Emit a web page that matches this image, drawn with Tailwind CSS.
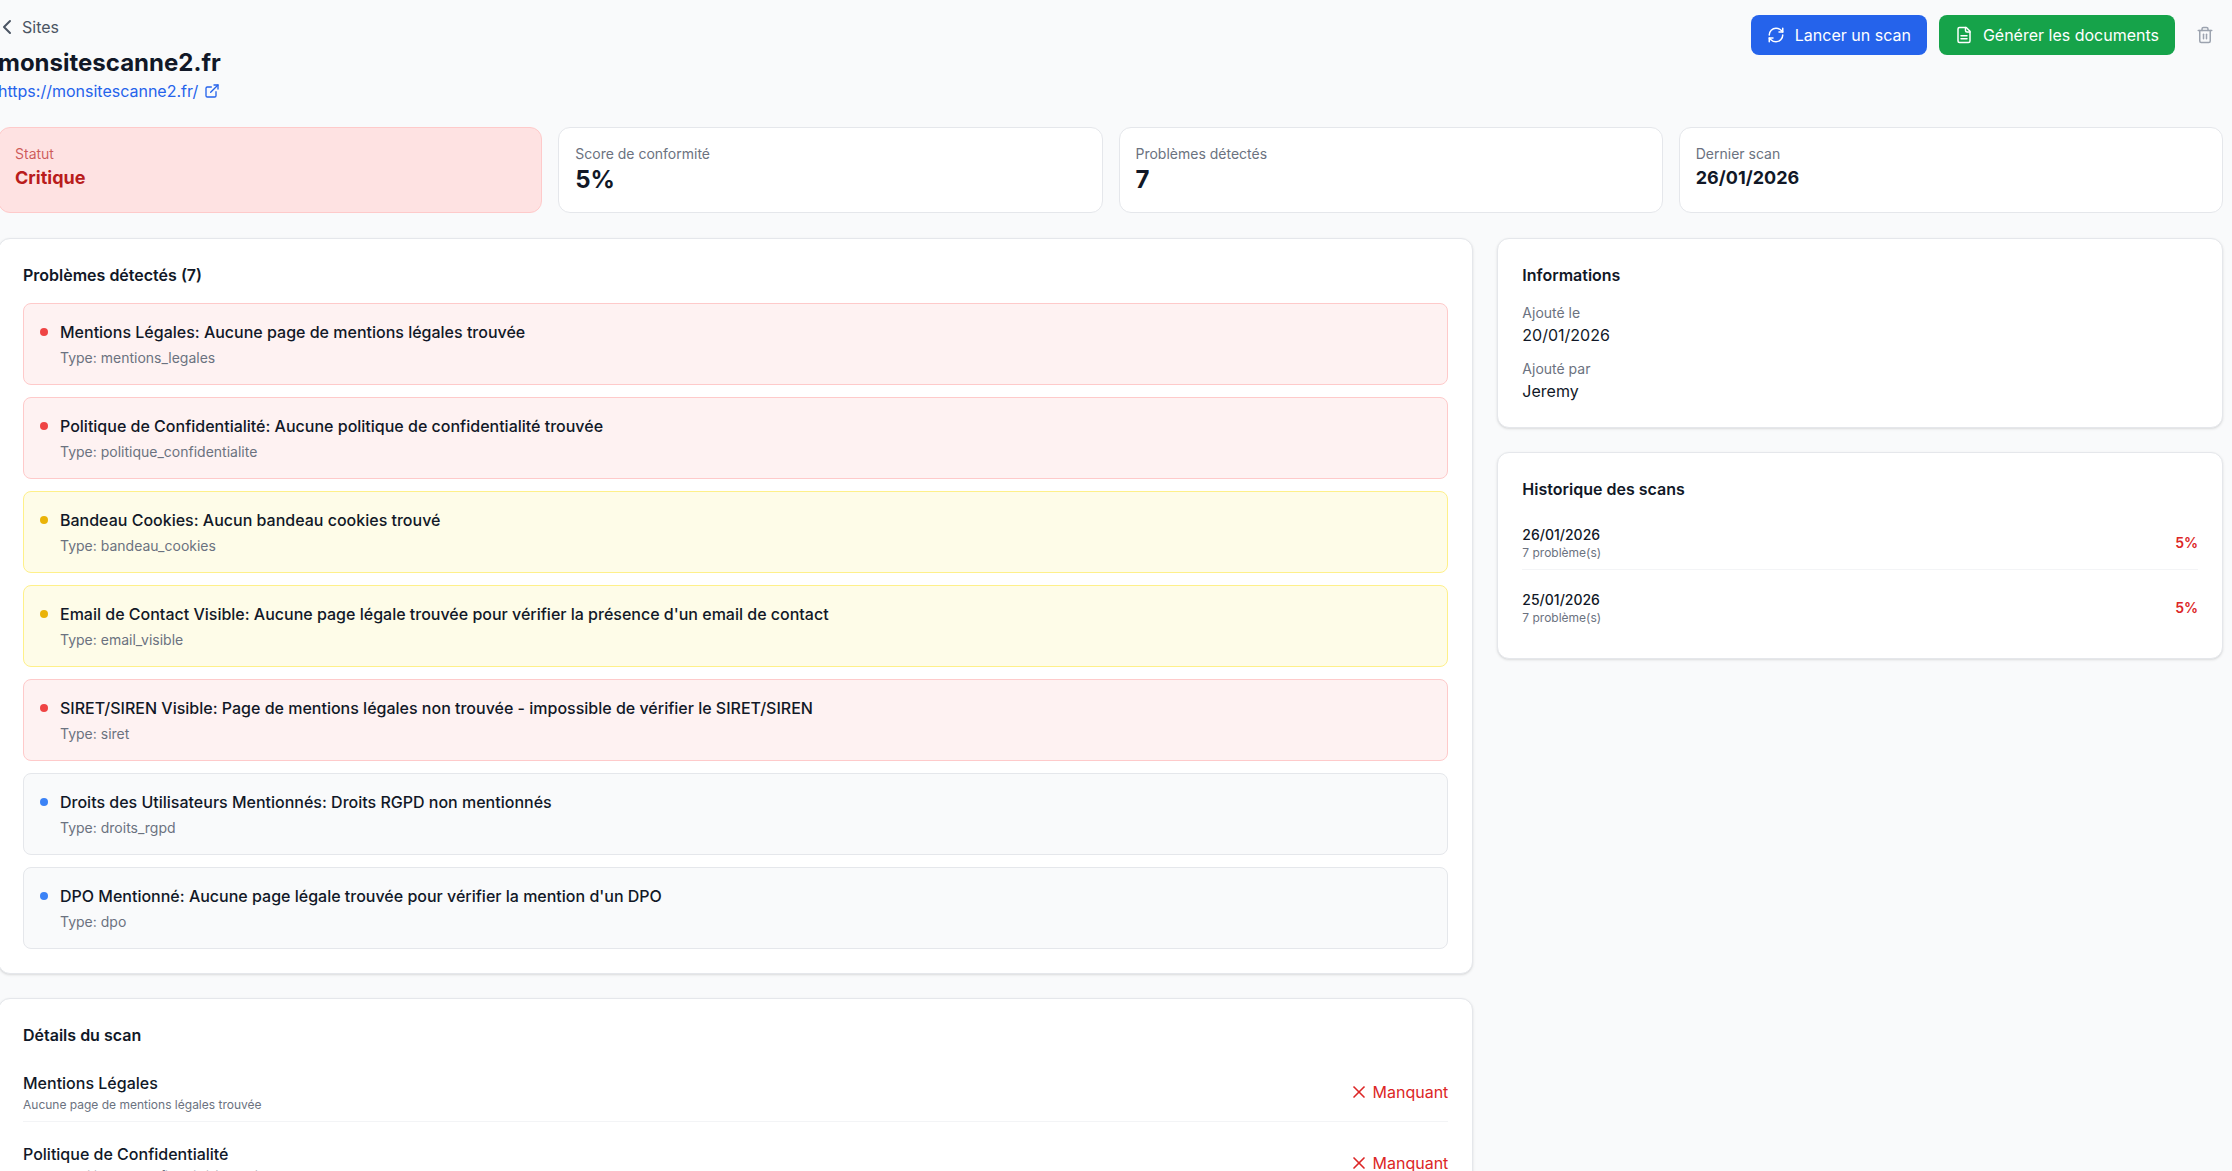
<!DOCTYPE html>
<html lang="fr">
<head>
    <meta charset="UTF-8">
    <meta name="viewport" content="width=device-width, initial-scale=1.0">
    <script src="https://cdn.jsdelivr.net/npm/@tailwindcss/browser@4"></script>
    <title>monsitescanne2.fr</title>
</head>
<body class="bg-[#f9fafb] h-screen overflow-hidden font-['Inter',sans-serif] text-[#111827]">
<div class="-ml-[2px] pr-[9px] pt-[15px]">

    <!-- Header -->
    <div class="flex justify-between items-start mb-6">
        <div>
            <a href="#" class="flex items-center gap-[3px] -ml-[3px] text-[#4b5563] mb-2">
                <svg class="w-6 h-6" fill="none" stroke="currentColor" stroke-width="2" stroke-linecap="round" stroke-linejoin="round" viewBox="0 0 24 24"><path d="m15 18-6-6 6-6"/></svg>
                Sites
            </a>
            <h1 class="text-2xl font-bold">monsitescanne2.fr</h1>
            <a href="#" class="flex items-center gap-1.5 text-[#2563eb]">
                https://monsitescanne2.fr/
                <svg class="w-4 h-4" fill="none" stroke="currentColor" stroke-width="2" stroke-linecap="round" stroke-linejoin="round" viewBox="0 0 24 24"><path d="M15 3h6v6"/><path d="M10 14 21 3"/><path d="M18 13v6a2 2 0 0 1-2 2H5a2 2 0 0 1-2-2V8a2 2 0 0 1 2-2h6"/></svg>
            </a>
        </div>
        <div class="flex items-center gap-3">
            <button class="flex items-center gap-2.5 bg-[#2563eb] text-white px-4 py-2 rounded-lg font-normal">
                <svg class="w-[18px] h-[18px]" fill="none" stroke="currentColor" stroke-width="2" stroke-linecap="round" stroke-linejoin="round" viewBox="0 0 24 24"><path d="M3 12a9 9 0 0 1 9-9 9.75 9.75 0 0 1 6.74 2.74L21 8"/><path d="M21 3v5h-5"/><path d="M21 12a9 9 0 0 1-9 9 9.75 9.75 0 0 1-6.74-2.74L3 16"/><path d="M8 16H3v5"/></svg>
                Lancer un scan
            </button>
            <button class="flex items-center gap-2.5 bg-[#16a34a] text-white px-4 py-2 rounded-lg font-normal">
                <svg class="w-[18px] h-[18px]" fill="none" stroke="currentColor" stroke-width="2" stroke-linecap="round" stroke-linejoin="round" viewBox="0 0 24 24"><path d="M15 2H6a2 2 0 0 0-2 2v16a2 2 0 0 0 2 2h12a2 2 0 0 0 2-2V7Z"/><path d="M14 2v4a2 2 0 0 0 2 2h4"/><path d="M16 13H8"/><path d="M16 17H8"/></svg>
                Générer les documents
            </button>
            <button class="p-[9px] text-[#9ca3af]">
                <svg class="w-[18px] h-[18px]" fill="none" stroke="currentColor" stroke-width="2" stroke-linecap="round" stroke-linejoin="round" viewBox="0 0 24 24"><path d="M3 6h18"/><path d="M19 6v14c0 1-1 2-2 2H7c-1 0-2-1-2-2V6"/><path d="M8 6V4c0-1 1-2 2-2h4c1 0 2 1 2 2v2"/><path d="M10 11v6"/><path d="M14 11v6"/></svg>
            </button>
        </div>
    </div>

    <!-- Stats -->
    <div class="grid grid-cols-4 gap-4 mb-[25px]">
        <div class="bg-[#fee2e2] border border-[#fecaca] rounded-xl p-4">
            <p class="text-sm text-[#b91c1c]/70">Statut</p>
            <p class="text-lg font-bold text-[#b91c1c]">Critique</p>
        </div>
        <div class="bg-white border border-[#e5e7eb] rounded-xl p-4">
            <p class="text-sm text-[#6b7280]">Score de conformité</p>
            <p class="text-2xl font-bold">5%</p>
        </div>
        <div class="bg-white border border-[#e5e7eb] rounded-xl p-4">
            <p class="text-sm text-[#6b7280]">Problèmes détectés</p>
            <p class="text-2xl font-bold">7</p>
        </div>
        <div class="bg-white border border-[#e5e7eb] rounded-xl p-4">
            <p class="text-sm text-[#6b7280]">Dernier scan</p>
            <p class="text-lg font-bold">26/01/2026</p>
        </div>
    </div>

    <div class="grid grid-cols-3 gap-6">
        <!-- Left column -->
        <div class="col-span-2 space-y-6">
            <div class="bg-white border border-[#e5e7eb] rounded-xl shadow-sm p-6">
                <h2 class="font-semibold mb-4">Problèmes détectés (7)</h2>
                <div class="space-y-3">
                    <div class="flex gap-3 bg-[#fef2f2] border border-[#fecaca] rounded-lg p-4">
                        <span class="w-2 h-2 mt-2 rounded-full bg-[#ef4444] shrink-0"></span>
                        <div>
                            <p class="font-medium">Mentions Légales: Aucune page de mentions légales trouvée</p>
                            <p class="text-sm text-[#6b7280] mt-1">Type: mentions_legales</p>
                        </div>
                    </div>
                    <div class="flex gap-3 bg-[#fef2f2] border border-[#fecaca] rounded-lg p-4">
                        <span class="w-2 h-2 mt-2 rounded-full bg-[#ef4444] shrink-0"></span>
                        <div>
                            <p class="font-medium">Politique de Confidentialité: Aucune politique de confidentialité trouvée</p>
                            <p class="text-sm text-[#6b7280] mt-1">Type: politique_confidentialite</p>
                        </div>
                    </div>
                    <div class="flex gap-3 bg-[#fefce8] border border-[#fef08a] rounded-lg p-4">
                        <span class="w-2 h-2 mt-2 rounded-full bg-[#eab308] shrink-0"></span>
                        <div>
                            <p class="font-medium">Bandeau Cookies: Aucun bandeau cookies trouvé</p>
                            <p class="text-sm text-[#6b7280] mt-1">Type: bandeau_cookies</p>
                        </div>
                    </div>
                    <div class="flex gap-3 bg-[#fefce8] border border-[#fef08a] rounded-lg p-4">
                        <span class="w-2 h-2 mt-2 rounded-full bg-[#eab308] shrink-0"></span>
                        <div>
                            <p class="font-medium">Email de Contact Visible: Aucune page légale trouvée pour vérifier la présence d'un email de contact</p>
                            <p class="text-sm text-[#6b7280] mt-1">Type: email_visible</p>
                        </div>
                    </div>
                    <div class="flex gap-3 bg-[#fef2f2] border border-[#fecaca] rounded-lg p-4">
                        <span class="w-2 h-2 mt-2 rounded-full bg-[#ef4444] shrink-0"></span>
                        <div>
                            <p class="font-medium">SIRET/SIREN Visible: Page de mentions légales non trouvée - impossible de vérifier le SIRET/SIREN</p>
                            <p class="text-sm text-[#6b7280] mt-1">Type: siret</p>
                        </div>
                    </div>
                    <div class="flex gap-3 bg-[#f9fafb] border border-[#e5e7eb] rounded-lg p-4">
                        <span class="w-2 h-2 mt-2 rounded-full bg-[#3b82f6] shrink-0"></span>
                        <div>
                            <p class="font-medium">Droits des Utilisateurs Mentionnés: Droits RGPD non mentionnés</p>
                            <p class="text-sm text-[#6b7280] mt-1">Type: droits_rgpd</p>
                        </div>
                    </div>
                    <div class="flex gap-3 bg-[#f9fafb] border border-[#e5e7eb] rounded-lg p-4">
                        <span class="w-2 h-2 mt-2 rounded-full bg-[#3b82f6] shrink-0"></span>
                        <div>
                            <p class="font-medium">DPO Mentionné: Aucune page légale trouvée pour vérifier la mention d'un DPO</p>
                            <p class="text-sm text-[#6b7280] mt-1">Type: dpo</p>
                        </div>
                    </div>
                </div>
            </div>

            <div class="bg-white border border-[#e5e7eb] rounded-xl shadow-sm p-6">
                <h2 class="font-semibold mb-4">Détails du scan</h2>
                <div class="space-y-3">
                    <div class="flex justify-between items-center py-2 border-b border-[#f3f4f6]">
                        <div>
                            <p class="font-medium">Mentions Légales</p>
                            <p class="text-xs text-[#6b7280] mt-0.5">Aucune page de mentions légales trouvée</p>
                        </div>
                        <span class="flex items-center gap-1 text-[#dc2626]">
                            <svg class="w-5 h-5" fill="none" stroke="currentColor" stroke-width="2" stroke-linecap="round" stroke-linejoin="round" viewBox="0 0 24 24"><path d="M18 6 6 18"/><path d="m6 6 12 12"/></svg>
                            Manquant
                        </span>
                    </div>
                    <div class="flex justify-between items-center py-2 border-b border-[#f3f4f6]">
                        <div>
                            <p class="font-medium">Politique de Confidentialité</p>
                            <p class="text-xs text-[#6b7280] mt-0.5">Aucune politique de confidentialité trouvée</p>
                        </div>
                        <span class="flex items-center gap-1 text-[#dc2626]">
                            <svg class="w-5 h-5" fill="none" stroke="currentColor" stroke-width="2" stroke-linecap="round" stroke-linejoin="round" viewBox="0 0 24 24"><path d="M18 6 6 18"/><path d="m6 6 12 12"/></svg>
                            Manquant
                        </span>
                    </div>
                </div>
            </div>
        </div>

        <!-- Right column -->
        <div class="space-y-6">
            <div class="bg-white border border-[#e5e7eb] rounded-xl shadow-sm p-6">
                <h2 class="font-semibold mb-4">Informations</h2>
                <div class="space-y-3">
                    <div>
                        <p class="text-sm text-[#6b7280]">Ajouté le</p>
                        <p>20/01/2026</p>
                    </div>
                    <div>
                        <p class="text-sm text-[#6b7280]">Ajouté par</p>
                        <p>Jeremy</p>
                    </div>
                </div>
            </div>
            <div class="bg-white border border-[#e5e7eb] rounded-xl shadow-sm p-6">
                <h2 class="font-semibold mb-4">Historique des scans</h2>
                <div class="space-y-3">
                    <div class="flex justify-between items-center py-2 border-b border-[#f3f4f6]">
                        <div>
                            <p class="text-sm font-medium">26/01/2026</p>
                            <p class="text-xs text-[#6b7280]">7 problème(s)</p>
                        </div>
                        <span class="text-sm font-semibold text-[#dc2626]">5%</span>
                    </div>
                    <div class="flex justify-between items-center py-2">
                        <div>
                            <p class="text-sm font-medium">25/01/2026</p>
                            <p class="text-xs text-[#6b7280]">7 problème(s)</p>
                        </div>
                        <span class="text-sm font-semibold text-[#dc2626]">5%</span>
                    </div>
                </div>
            </div>
        </div>
    </div>
</div>
</body>
</html>
